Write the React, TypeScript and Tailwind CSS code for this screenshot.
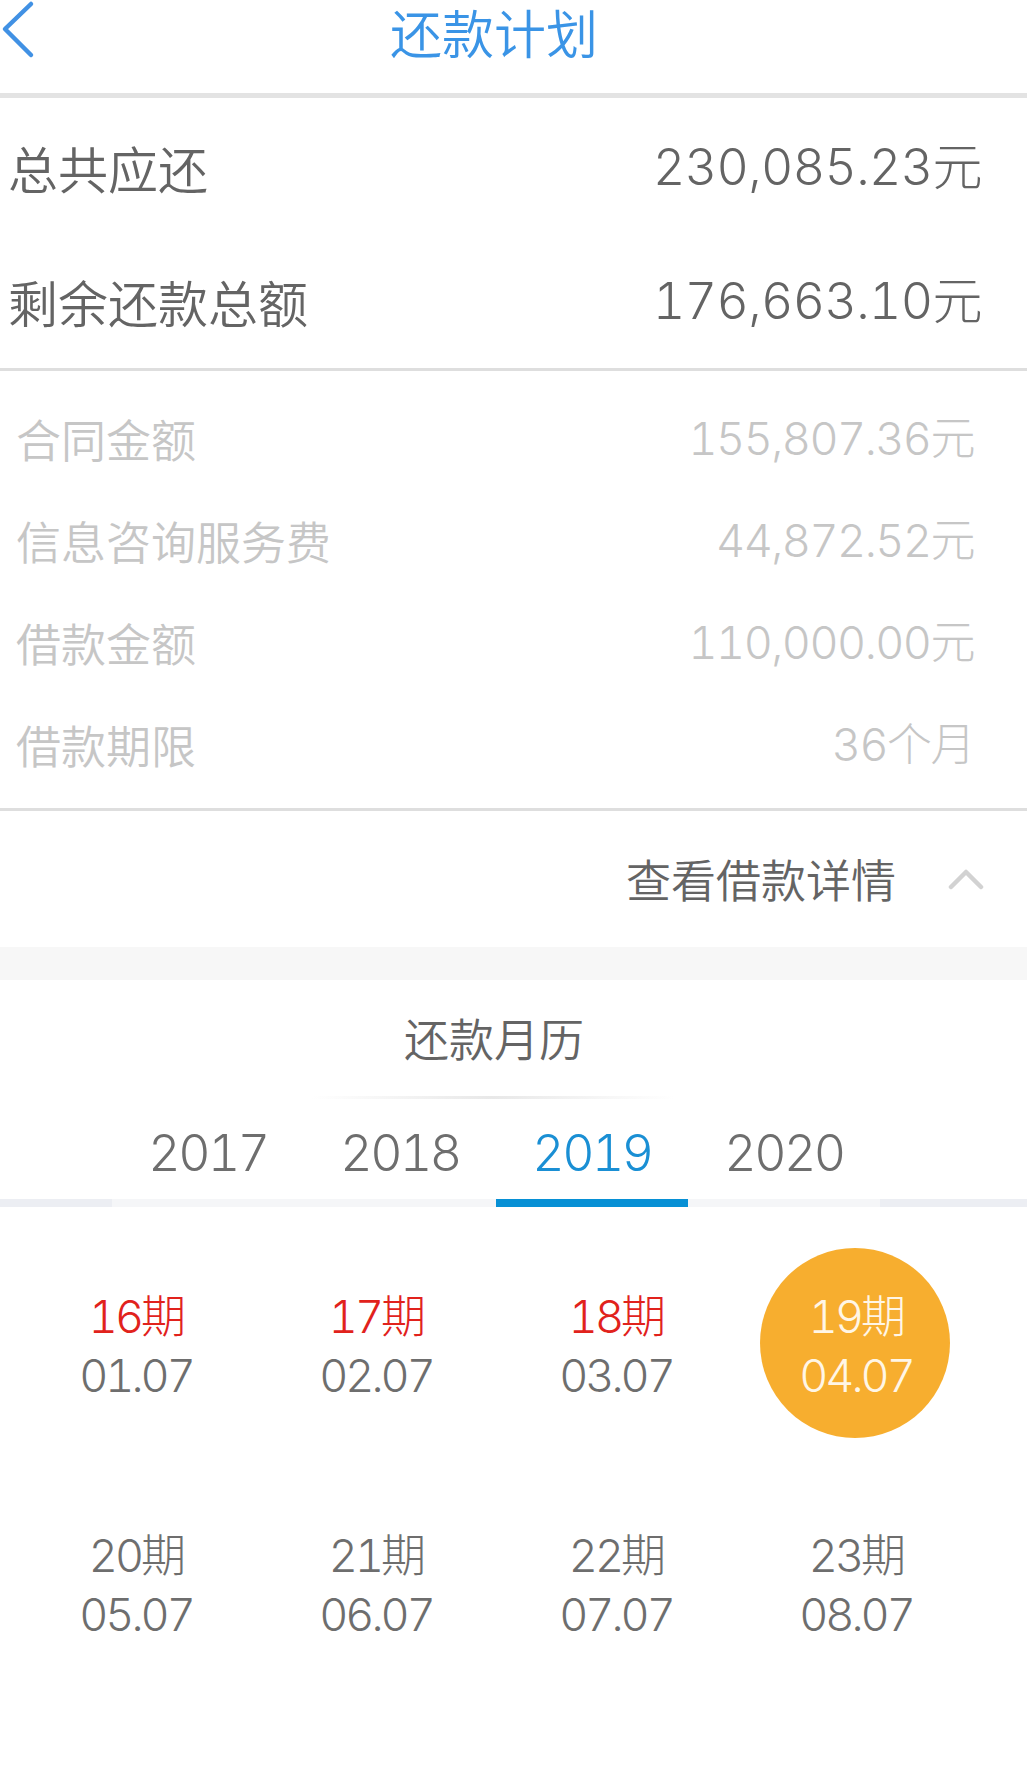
import React from "react";

const periods = [
  { n: "16", d: "01.07", state: "overdue" },
  { n: "17", d: "02.07", state: "overdue" },
  { n: "18", d: "03.07", state: "overdue" },
  { n: "19", d: "04.07", state: "current" },
  { n: "20", d: "05.07", state: "normal" },
  { n: "21", d: "06.07", state: "normal" },
  { n: "22", d: "07.07", state: "normal" },
  { n: "23", d: "08.07", state: "normal" },
];

const details = [
  ["合同金额", "155,807.36元"],
  ["信息咨询服务费", "44,872.52元"],
  ["借款金额", "110,000.00元"],
  ["借款期限", "36个月"],
];

export default function App() {
  return (
    <div className="w-[1027px] min-h-[1771px] bg-white font-['Noto_Sans_CJK_SC','Noto_Sans',sans-serif] font-[350] text-[#666]">
      {/* Header */}
      <div className="relative h-[93px]">
        <svg className="absolute left-0 top-0" width="40" height="60" viewBox="0 0 40 60">
          <polyline points="31,4 5,29 31,55" fill="none" stroke="#4191e4" strokeWidth="4.5" strokeLinecap="round" strokeLinejoin="round" />
        </svg>
        <div className="w-[988px] h-[64px] flex items-center justify-center text-[52px] leading-[64px] text-[#3a94e6]">
          还款计划
        </div>
      </div>
      <div className="h-[5px] bg-[#e3e3e3]" />

      {/* Totals */}
      <div className="pt-[2px] pl-[8px] pr-[45px] border-b-[3px] border-[#dedede]">
        <div className="h-[134px] flex items-center justify-between text-[50px] text-[#646464]">
          <span>总共应还</span>
          <span className="font-['Inter','Noto_Sans_CJK_SC',sans-serif] font-light tabular-nums tracking-[-0.6px]">230,085.23元</span>
        </div>
        <div className="h-[134px] flex items-center justify-between text-[50px] text-[#646464]">
          <span>剩余还款总额</span>
          <span className="font-['Inter','Noto_Sans_CJK_SC',sans-serif] font-light tabular-nums tracking-[-0.6px]">176,663.10元</span>
        </div>
      </div>

      {/* Details */}
      <div className="pt-[17px] pb-[12px] pl-[16px] pr-[53px] border-b-[3px] border-[#dedede]">
        {details.map(([k, v]) => (
          <div key={k} className="h-[102px] flex items-center justify-between text-[45px] text-[#c6c6c6]">
            <span>{k}</span>
            <span className="font-['Inter','Noto_Sans_CJK_SC',sans-serif] font-light tabular-nums tracking-[-1.5px]">{v}</span>
          </div>
        ))}
      </div>

      {/* Toggle */}
      <div className="h-[136px] flex items-center justify-end pr-[43px]">
        <span className="text-[45px] text-[#646464]">查看借款详情</span>
        <svg className="ml-[52px]" width="36" height="22" viewBox="0 0 36 22">
          <polyline points="3,19 18,4 33,19" fill="none" stroke="#d2d2d2" strokeWidth="4.5" strokeLinecap="round" strokeLinejoin="round" />
        </svg>
      </div>
      <div className="h-[33px] bg-[#f7f7f7]" />

      {/* Calendar title */}
      <div className="w-[988px] h-[116px] flex items-center justify-center text-[45px] text-[#646464]">
        还款月历
      </div>
      <div className="ml-[311px] w-[364px] h-[3px] bg-gradient-to-r from-transparent via-[#e8e8e8] to-transparent" />

      {/* Year tabs */}
      <div className="flex ml-[112px] w-[768px]">
        {["2017", "2018", "2019", "2020"].map((y) => (
          <div
            key={y}
            className={
              y === "2019"
                ? "w-[192px] h-[100px] pt-[8px] flex items-center justify-center text-[50px] text-[#1a8fd4] font-['Inter',sans-serif] font-light tabular-nums tracking-[-2.5px]"
                : "w-[192px] h-[100px] pt-[8px] flex items-center justify-center text-[50px] text-[#6e6e6e] font-['Inter',sans-serif] font-light tabular-nums tracking-[-2.5px]"
            }
          >
            {y}
          </div>
        ))}
      </div>
      <div className="h-[8px] bg-[#eceef3]">
        <div className="ml-[112px] w-[768px] h-full bg-[#f5f6f8] flex">
          <div className="ml-[384px] w-[192px] h-full bg-[#0790d5]" />
        </div>
      </div>

      {/* Periods grid */}
      <div className="pt-[20px] pl-[16px] grid grid-cols-[repeat(4,240px)]">
        {periods.map((it) => (
          <div key={it.n} className="relative h-[239px] flex items-center justify-center">
            {it.state === "current" && (
              <div className="absolute left-[24px] top-[21px] w-[190px] h-[190px] rounded-full bg-[#f7ae2f]" />
            )}
            <div className="relative flex flex-col items-center text-[45px] font-['Inter','Noto_Sans_CJK_SC',sans-serif] font-light tabular-nums tracking-[-3px]">
              <div
                className={
                  it.state === "overdue"
                    ? "h-[59px] flex items-center text-[#e1221c]"
                    : it.state === "current"
                    ? "h-[59px] flex items-center text-[#fff6e6]"
                    : "h-[59px] flex items-center text-[#6e6e6e]"
                }
              >
                {it.n}期
              </div>
              <div
                className={
                  it.state === "current"
                    ? "h-[59px] flex items-center text-[#fff6e6]"
                    : "h-[59px] flex items-center text-[#6e6e6e]"
                }
              >
                {it.d}
              </div>
            </div>
          </div>
        ))}
      </div>
    </div>
  );
}
